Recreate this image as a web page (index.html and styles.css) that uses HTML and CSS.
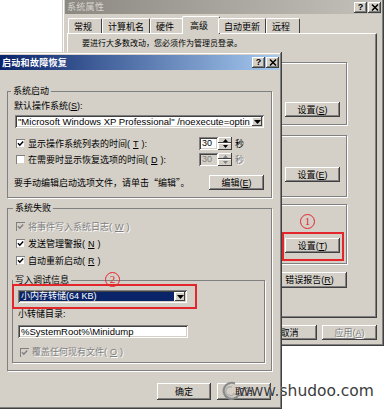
FILE: index.html
```html
<!doctype html>
<html lang="zh-CN">
  <head>
    <meta charset="UTF-8" />
    <meta name="viewport" content="width=device-width, initial-scale=1.0" />
    <title>启动和故障恢复</title>
    <link rel="stylesheet" href="styles.css">
  </head>
  <body>
    <div class="desk">

      <!-- 系统属性 (behind) -->
      <div class="win back">
        <div class="caption off">
          <span class="caption-text">系统属性</span>
          <span class="cap-btns">
            <span class="cap-btn">?</span>
            <span class="cap-btn"><svg width="8" height="7" viewBox="0 0 8 7"><path d="M1 0.5L7 6.5M7 0.5L1 6.5" stroke="#000" stroke-width="1.5"/></svg></span>
          </span>
        </div>
        <div class="back-body">
          <div class="tabs">
            <span class="tab">常规</span>
            <span class="tab">计算机名</span>
            <span class="tab">硬件</span>
            <span class="tab active">高级</span>
            <span class="tab">自动更新</span>
            <span class="tab">远程</span>
          </div>
          <div class="tab-panel">
            <p class="notice">要进行大多数改动，您必须作为管理员登录。</p>
            <div class="group g1"><button class="btn">设置(<u>S</u>)</button></div>
            <div class="group g2"><button class="btn">设置(<u>E</u>)</button></div>
            <div class="group g3"><button class="btn">设置(<u>T</u>)</button></div>
            <div class="panel-actions">
              <button class="btn wide">环境变量(<u>N</u>)</button>
              <button class="btn wide">错误报告(<u>R</u>)</button>
            </div>
          </div>
          <div class="dlg-actions">
            <button class="btn">确定</button>
            <button class="btn">取消</button>
            <button class="btn disabled">应用(<u>A</u>)</button>
          </div>
        </div>
      </div>

      <!-- 启动和故障恢复 (front) -->
      <div class="win front">
        <div class="caption">
          <span class="caption-text">启动和故障恢复</span>
          <span class="cap-btns">
            <span class="cap-btn">?</span>
            <span class="cap-btn"><svg width="8" height="7" viewBox="0 0 8 7"><path d="M1 0.5L7 6.5M7 0.5L1 6.5" stroke="#000" stroke-width="1.5"/></svg></span>
          </span>
        </div>
        <div class="front-body">
          <fieldset class="box boot">
            <legend>系统启动</legend>
            <div class="label">默认操作系统(<u>S</u>):</div>
            <div class="combo os-combo">
              <span class="combo-text">"Microsoft Windows XP Professional" /noexecute=optin</span>
              <span class="combo-arrow"><svg width="7" height="4" viewBox="0 0 7 4"><path d="M0 0H7L3.5 4Z"/></svg></span>
            </div>
            <div class="opt-row">
              <label class="check"><span class="cb"><svg width="9" height="9" viewBox="0 0 9 9"><path d="M2 4.3L3.8 6.2L7.2 2.6" stroke="#000" stroke-width="1.5" fill="none"/></svg></span>显示操作系统列表的时间(<u>T</u>):</label>
              <span class="spin">
                <span class="spin-val">30</span>
                <span class="spin-btns">
                  <span class="spin-btn"><svg width="5" height="3" viewBox="0 0 5 3"><path d="M0 3H5L2.5 0Z"/></svg></span>
                  <span class="spin-btn"><svg width="5" height="3" viewBox="0 0 5 3"><path d="M0 0H5L2.5 3Z"/></svg></span>
                </span>
              </span>
              <span class="unit">秒</span>
            </div>
            <div class="opt-row">
              <label class="check"><span class="cb"></span>在需要时显示恢复选项的时间(<u>D</u>):</label>
              <span class="spin off">
                <span class="spin-val">30</span>
                <span class="spin-btns">
                  <span class="spin-btn"><svg width="5" height="3" viewBox="0 0 5 3"><path d="M0 3H5L2.5 0Z" fill="#808080"/></svg></span>
                  <span class="spin-btn"><svg width="5" height="3" viewBox="0 0 5 3"><path d="M0 0H5L2.5 3Z" fill="#808080"/></svg></span>
                </span>
              </span>
              <span class="unit disabled">秒</span>
            </div>
            <div class="edit-row">
              <span>要手动编辑启动选项文件，请单击<span class="cjk">“编辑”</span>。</span>
              <button class="btn">编辑(<u>E</u>)</button>
            </div>
          </fieldset>

          <fieldset class="box failure">
            <legend>系统失败</legend>
            <label class="check fail-row disabled"><span class="cb off"><svg width="9" height="9" viewBox="0 0 9 9"><path d="M2 4.3L3.8 6.2L7.2 2.6" stroke="#808080" stroke-width="1.5" fill="none"/></svg></span>将事件写入系统日志(<u>W</u>)</label>
            <label class="check fail-row"><span class="cb"><svg width="9" height="9" viewBox="0 0 9 9"><path d="M2 4.3L3.8 6.2L7.2 2.6" stroke="#000" stroke-width="1.5" fill="none"/></svg></span>发送管理警报(<u>N</u>)</label>
            <label class="check fail-row"><span class="cb"><svg width="9" height="9" viewBox="0 0 9 9"><path d="M2 4.3L3.8 6.2L7.2 2.6" stroke="#000" stroke-width="1.5" fill="none"/></svg></span>自动重新启动(<u>R</u>)</label>

            <fieldset class="box dump">
              <legend>写入调试信息</legend>
              <div class="combo dump-combo">
                <span class="combo-text selected">小内存转储(64 KB)</span>
                <span class="combo-arrow"><svg width="7" height="4" viewBox="0 0 7 4"><path d="M0 0H7L3.5 4Z"/></svg></span>
              </div>
              <div class="label dump-label">小转储目录:</div>
              <div class="field path">%SystemRoot%\Minidump</div>
              <label class="check dump-row disabled"><span class="cb off"><svg width="9" height="9" viewBox="0 0 9 9"><path d="M2 4.3L3.8 6.2L7.2 2.6" stroke="#808080" stroke-width="1.5" fill="none"/></svg></span>覆盖任何现有文件(<u>O</u>)</label>
            </fieldset>
          </fieldset>

          <div class="dlg-actions front-actions">
            <button class="btn">确定</button>
            <button class="btn">取消</button>
          </div>
        </div>
      </div>

      <!-- annotations -->
      <div class="mark mark-1"></div>
      <div class="mark mark-2"></div>
      <span class="num num-1">1</span>
      <span class="num num-2">2</span>

      <div class="watermark">
        <svg width="18" height="20" viewBox="0 0 18 20">
          <path d="M13 2.5A8 8 0 1 0 16.5 14" stroke="#8a8a8a" stroke-width="2.2" fill="none"/>
          <path d="M10 6A4.5 4.5 0 1 0 12.5 12" stroke="#b0b0b0" stroke-width="1.6" fill="none"/>
        </svg>
        <span class="watermark-text">www.shudoo.com</span>
      </div>
    </div>
  </body>
</html>
```

FILE: styles.css
```css
* {
  box-sizing: border-box;
}
body {
  margin: 0;
  background-color: #fff;
  font-family: "Liberation Sans", "Noto Sans CJK SC", sans-serif;
  font-size: 9px;
  line-height: 10px;
  color: #000;
  text-autospace: no-autospace;
}
u {
  text-underline-offset: 1px;
}
.cjk {
  font-family: "Noto Sans CJK SC", sans-serif;
}
.desk {
  position: relative;
  width: 384px;
  height: 411px;
  overflow: hidden;
}

/* windows */
.win {
  position: absolute;
  padding: 3px;
  background-color: #d4d0c8;
  box-shadow: inset -1px -1px #404040, inset 1px 1px #d4d0c8, inset -2px -2px #808080, inset 2px 2px #fff;
}
.back {
  left: 62px;
  top: -3px;
  width: 322px;
  height: 349px;
}
.front {
  left: -3px;
  top: 52px;
  width: 285px;
  height: 357px;
}
.caption {
  display: flex;
  align-items: center;
  justify-content: space-between;
  height: 15px;
  padding-left: 2px;
  background: linear-gradient(to right, #0a246a, #a6caf0);
  color: #fff;
  font-weight: bold;
  letter-spacing: 0.3px;
}
.caption.off {
  height: 14px;
  background: linear-gradient(to right, #8c8882, #c4c1bb);
  color: #d8d5cf;
  font-weight: normal;
}
.cap-btns {
  display: flex;
  gap: 1px;
}
.cap-btn {
  display: flex;
  align-items: center;
  justify-content: center;
  width: 13px;
  height: 11px;
  background-color: #d4d0c8;
  box-shadow: inset -1px -1px #404040, inset 1px 1px #fff, inset -2px -2px #808080;
  color: #000;
  font: bold 9px/1 "Liberation Sans", sans-serif;
  letter-spacing: 0;
}

/* buttons */
.btn {
  display: flex;
  align-items: center;
  justify-content: center;
  width: 55px;
  height: 15px;
  padding: 0;
  border: none;
  background-color: #d4d0c8;
  box-shadow: inset -1px -1px #404040, inset 1px 1px #fff, inset -2px -2px #808080;
  font: inherit;
  color: #000;
}
.btn.wide {
  width: 75px;
  height: 16px;
}
.disabled {
  color: #808080;
  text-shadow: 1px 1px #fff;
}

/* back dialog */
.back-body {
  padding: 0 4px 0 2px;
}
.tabs {
  position: relative;
  z-index: 1;
  display: flex;
  align-items: flex-end;
  height: 19px;
  padding-left: 1px;
}
.tab {
  min-width: 34px;
  height: 15px;
  padding: 3px 5px 0;
  border: 1px solid #fff;
  border-bottom: none;
  border-right-color: #404040;
  border-radius: 2px 2px 0 0;
  background-color: #d4d0c8;
  white-space: nowrap;
}
.tab.active {
  min-width: 38px;
  height: 18px;
  margin: 0 -2px -1px;
  padding: 4px 7px 0;
}
.tab-panel {
  height: 285px;
  padding: 5px 29px 0 7px;
  border: 1px solid;
  border-color: #fff #404040 #404040 #fff;
  box-shadow: inset -1px -1px #808080;
}
.notice {
  margin: 0 0 0 7px;
  font-size: 8px;
}
.group {
  display: flex;
  justify-content: flex-end;
  align-items: flex-end;
  padding: 0 6px 7px;
  border: 1px solid #808080;
  box-shadow: inset 1px 1px #fff, 1px 1px #fff;
}
.g1 {
  height: 63px;
  margin-top: 13px;
}
.g2 {
  height: 62px;
  margin-top: 10px;
  padding-bottom: 14px;
}
.g3 {
  height: 60px;
  margin-top: 7px;
  padding-bottom: 10px;
}
.panel-actions {
  display: flex;
  justify-content: flex-end;
  gap: 6px;
  margin-top: 8px;
}
.dlg-actions {
  display: flex;
  justify-content: flex-end;
  gap: 5px;
  margin-top: 7px;
}

/* front dialog */
.front-body {
  padding: 0 7px;
}
.box {
  min-width: 0;
  margin: 0;
  padding: 5px 6px 7px;
  border: 1px solid #808080;
  box-shadow: 1px 1px #fff;
}
.box legend {
  margin-left: -3px;
  padding: 0 2px;
  line-height: 10px;
}
.boot {
  margin-top: 16px;
}
.failure {
  margin-top: 5px;
  padding-left: 4px;
}
.failure > legend {
  margin-left: 1px;
}
.dump {
  margin-top: 6px;
  padding: 5px 5px 3px;
}
.dump > legend {
  margin-left: -5px;
}
.field,
.combo,
.spin-val {
  background-color: #fff;
  box-shadow: inset 1px 1px #808080, inset -1px -1px #fff, inset 2px 2px #404040, inset -2px -2px #d4d0c8;
}
.combo {
  display: flex;
  align-items: center;
  height: 13px;
  padding: 2px;
}
.combo-text {
  flex: 1;
  height: 9px;
  padding-left: 1px;
  overflow-x: clip;
  overflow-y: visible;
  white-space: nowrap;
  font-size: 9.5px;
  line-height: 9px;
}
.combo-text.selected {
  margin-right: 1px;
  background-color: #0a246a;
  color: #fff;
  font-size: 9px;
}
.combo-arrow {
  display: flex;
  align-items: center;
  justify-content: center;
  width: 10px;
  height: 9px;
  background-color: #d4d0c8;
  box-shadow: inset -1px -1px #404040, inset 1px 1px #fff;
}
.os-combo {
  margin: 4px 1px 0;
}
.opt-row {
  display: flex;
  align-items: center;
  height: 13px;
  margin-top: 9px;
  padding: 0 21px 0 2px;
}
.opt-row + .opt-row {
  margin-top: 3px;
}
.check {
  display: flex;
  align-items: center;
  gap: 3px;
  flex: 1;
  white-space: nowrap;
}
.cb {
  flex: none;
  width: 9px;
  height: 9px;
  background-color: #fff;
  box-shadow: inset 1px 1px #808080, inset -1px -1px #d4d0c8;
}
.cb svg {
  display: block;
}
.cb.off {
  background-color: #d4d0c8;
}
.spin {
  display: flex;
  width: 33px;
  height: 13px;
}
.spin-val {
  width: 19px;
  padding: 2px 0 0 3px;
  line-height: 9px;
}
.spin.off .spin-val {
  background-color: #d4d0c8;
  color: #808080;
}
.spin-btns {
  display: grid;
  grid-template-rows: 6px 7px;
  width: 14px;
}
.spin-btn {
  display: flex;
  align-items: center;
  justify-content: center;
  background-color: #d4d0c8;
  box-shadow: inset -1px -1px #404040, inset 1px 1px #fff;
}
.unit {
  width: 9px;
  margin-left: 3px;
}
.edit-row {
  display: flex;
  align-items: center;
  justify-content: space-between;
  height: 15px;
  margin-top: 9px;
  padding-right: 1px;
}
.fail-row {
  height: 17px;
  padding-left: 4px;
}
.dump-combo {
  width: 169px;
}
.dump-label {
  margin-top: 6px;
}
.field {
  height: 13px;
  padding: 2px 0 0 3px;
  font-size: 9.5px;
  line-height: 9px;
}
.path {
  width: 170px;
  margin-top: 6px;
}
.dump-row {
  height: 14px;
  margin-top: 7px;
  padding-left: 2px;
}
.front-actions {
  gap: 6px;
  margin-top: 12px;
  padding-right: 1px;
}
.front-actions .btn {
  width: 54px;
  height: 17px;
}

/* annotations */
.mark {
  position: absolute;
  border: 2px solid #e3262b;
}
.mark-1 {
  left: 282px;
  top: 232px;
  width: 62px;
  height: 29px;
}
.mark-2 {
  left: 12px;
  top: 284px;
  width: 185px;
  height: 25px;
}
.num {
  position: absolute;
  width: 15px;
  height: 15px;
  border: 1.5px solid #e3262b;
  border-radius: 50%;
  color: #e3262b;
  font: 11px/12px "Liberation Serif", serif;
  text-align: center;
}
.num-1 {
  left: 300px;
  top: 214px;
}
.num-2 {
  left: 105px;
  top: 272px;
}
.watermark {
  position: absolute;
  left: 222px;
  top: 381px;
  display: flex;
  align-items: center;
}
.watermark-text {
  margin-left: -2px;
  font-family: "DejaVu Sans", sans-serif;
  font-size: 15.5px;
  line-height: 20px;
  color: #3c3c3c;
  text-shadow: 0 0 1px #fff;
}
```
